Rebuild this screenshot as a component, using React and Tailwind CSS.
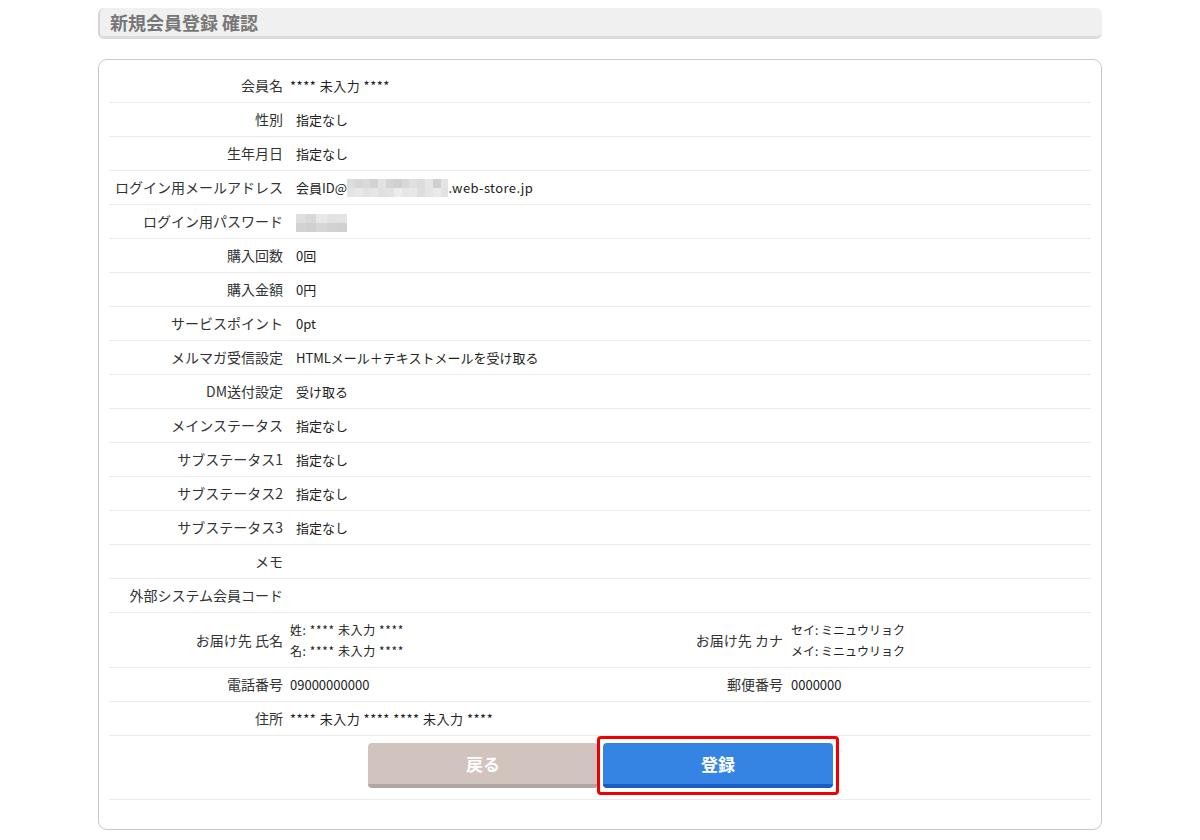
const font = { fontFamily: '"Noto Sans CJK JP", "Noto Sans", sans-serif' };

const emailMosaic = [
  ["#dcdcdc", "#d6d6d6", "#dadada", "#d2d2d2", "#e2e2e2", "#d4d4d4", "#d0d0d0", "#d8d8d8", "#e0e0e0", "#dcdcdc", "#e6e6e6", "#d0d0d0", "#e4e4e4"],
  ["#e4e4e4", "#e8e8e8", "#e2e2e2", "#e6e6e6", "#e0e0e0", "#e2e2e2", "#ececec", "#e6e6e6", "#e8e8e8", "#dedede", "#e4e4e4", "#eaeaea", "#e2e2e2"],
];
const passMosaic = [
  ["#dedede", "#d8d8d8", "#e8e8e8", "#e2e2e2", "#e4e4e4"],
  ["#d2d2d2", "#d0d0d0", "#d6d6d6", "#d2d2d2", "#d0d0d0"],
];

function Mosaic({ data, cell, h }) {
  return (
    <span className="inline-flex flex-col align-middle">
      {data.map((row, i) => (
        <span key={i} className="flex">
          {row.map((c, j) => (
            <span key={j} style={{ background: c, width: cell, height: h }} />
          ))}
        </span>
      ))}
    </span>
  );
}

const rows = [
  ["性別", "指定なし"],
  ["生年月日", "指定なし"],
  ["ログイン用メールアドレス", "email"],
  ["ログイン用パスワード", "pass"],
  ["購入回数", "0回"],
  ["購入金額", "0円"],
  ["サービスポイント", "0pt"],
  ["メルマガ受信設定", "HTMLメール＋テキストメールを受け取る"],
  ["DM送付設定", "受け取る"],
  ["メインステータス", "指定なし"],
  ["サブステータス1", "指定なし"],
  ["サブステータス2", "指定なし"],
  ["サブステータス3", "指定なし"],
  ["メモ", ""],
  ["外部システム会員コード", ""],
];

function Value({ v }) {
  if (v === "email")
    return (
      <span className="flex items-center">
        会員ID@
        <Mosaic data={emailMosaic} cell={7.8} h={9} />
        <span className="tracking-[0.4px]">.web-store.jp</span>
      </span>
    );
  if (v === "pass") return <Mosaic data={passMosaic} cell={10.2} h={9} />;
  return v;
}

const label = "text-right text-[14px] text-[#333]";

export default function App() {
  return (
    <div className="w-[1200px] h-[840px] bg-white text-[13px] text-[#222]" style={font}>
      <div className="mx-[98px] pt-2">
        <div className="h-[31px] rounded-[6px] bg-[#f0f0f0] border-l-2 border-l-[#d6d6d6] border-b-[3px] border-b-[#dcdcdc] flex items-center pl-[10px]">
          <span className="text-[18px] font-bold text-[#777] leading-none">新規会員登録 確認</span>
        </div>

        <div className="mt-[20px] h-[771px] border border-[#c8c8c8] rounded-[9px] px-[10px] pt-[9px]">
          <div className="flex h-[34px] items-center border-b border-[#ebebeb]">
            <div className={`w-[174px] ${label}`}>会員名</div>
            <div className="pl-[7px] tracking-[0.5px]">**** 未入力 ****</div>
          </div>
          {rows.map(([k, v]) => (
            <div key={k} className="flex h-[34px] items-center border-b border-[#ebebeb]">
              <div className={`w-[174px] ${label}`}>{k}</div>
              <div className="pl-[13px]">
                <Value v={v} />
              </div>
            </div>
          ))}

          <div className="flex h-[55px] items-center border-b border-[#ebebeb]">
            <div className={`w-[174px] ${label}`}>お届け先 氏名</div>
            <div className="pl-[7px] w-[317px] text-[12px] leading-[21px] tracking-[0.6px]">
              <div>姓: **** 未入力 ****</div>
              <div>名: **** 未入力 ****</div>
            </div>
            <div className={`w-[183px] ${label}`}>お届け先 カナ</div>
            <div className="pl-[8px] text-[12px] leading-[21px]">
              <div>セイ: ミニュウリョク</div>
              <div>メイ: ミニュウリョク</div>
            </div>
          </div>
          <div className="flex h-[34px] items-center border-b border-[#ebebeb]">
            <div className={`w-[174px] ${label}`}>電話番号</div>
            <div className="pl-[7px] w-[317px]">09000000000</div>
            <div className={`w-[183px] ${label}`}>郵便番号</div>
            <div className="pl-[8px]">0000000</div>
          </div>
          <div className="flex h-[34px] items-center border-b border-[#ebebeb]">
            <div className={`w-[174px] ${label}`}>住所</div>
            <div className="pl-[7px] tracking-[0.5px]">**** 未入力 **** **** 未入力 ****</div>
          </div>

          <div className="flex h-[64px] border-b border-[#ebebeb] pl-[259px] pt-[6px]">
            <button className="w-[230px] h-[45px] rounded-[4px] bg-[#d1c4bf] border-b-[4px] border-b-[#b1a6a1] text-white text-[17px] font-bold mt-px">
              戻る
            </button>
            <div className="ml-[-1px] h-[59px] w-[242px] -mt-[6px] border-[3px] border-[#f00000] rounded-[4px] p-[3px] pt-[4px]">
              <button className="w-[230px] h-[45px] rounded-[4px] bg-[#3584e4] border-b-[4px] border-b-[#175ec0] text-white text-[17px] font-bold">
                登録
              </button>
            </div>
          </div>
        </div>
      </div>
    </div>
  );
}
